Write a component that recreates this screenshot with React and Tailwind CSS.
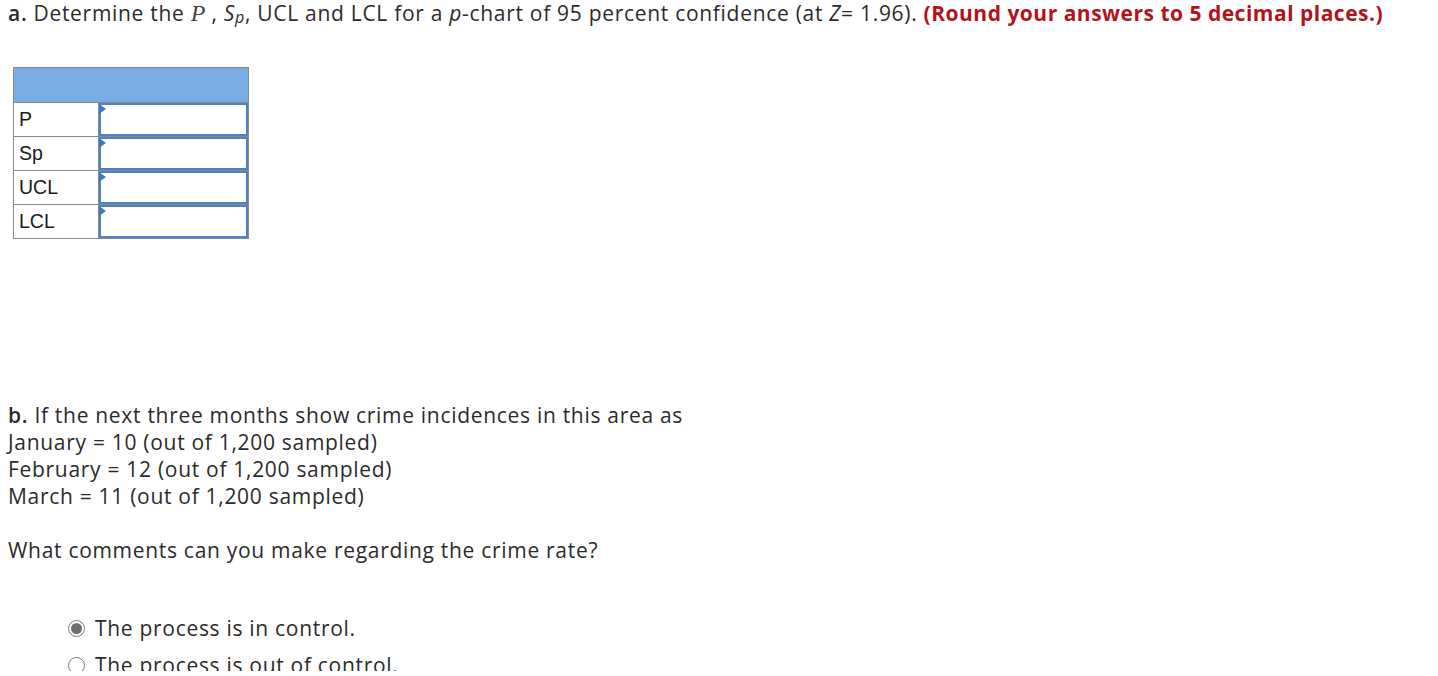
import React from "react";

function InputCell() {
  return (
    <td className="relative p-0 border border-[#8a8a8a] w-[149px]">
      <div className="relative h-[33px] border-2 border-[#4d83c6] bg-white">
        <div className="absolute left-[-2px] top-[-1px] w-0 h-0 border-t-[5px] border-b-[5px] border-l-[7px] border-t-transparent border-b-transparent border-l-[#3c78c2]" />
      </div>
    </td>
  );
}

function Row({ label }) {
  return (
    <tr>
      <td className="border border-[#8a8a8a] w-[85px] h-[34px] pl-[5px] text-[19.5px] text-[#1a1a1a] align-middle tracking-normal" style={{ fontFamily: '"Liberation Sans", Arial, sans-serif' }}>
        {label}
      </td>
      <InputCell />
    </tr>
  );
}

function Radio({ checked, children }) {
  return (
    <div className="flex items-center h-[37px]">
      <span className="w-[17px] h-[17px] rounded-full border border-[#777] bg-white flex items-center justify-center mr-[10px]">
        {checked && <span className="w-[11px] h-[11px] rounded-full bg-[#6f6f6f]" />}
      </span>
      <span>{children}</span>
    </div>
  );
}

export default function App() {
  return (
    <div
      className="w-[1438px] h-[671px] overflow-hidden bg-white text-[#2b2b2b] text-[21px] tracking-[0.7px]"
      style={{ fontFamily: '"Open Sans", "Noto Sans", sans-serif' }}
    >
      <div className="pl-[8px] pt-0 leading-[26px] whitespace-nowrap">
        <b className="font-semibold">a.</b> Determine the{" "}
        <span className="italic text-[24px] leading-[24px] text-[#444] tracking-normal" style={{ fontFamily: '"Liberation Serif", serif' }}>P</span>
        <span> , </span>
        <i>S</i>
        <sub className="italic text-[16px] leading-[16px] relative top-[2px]">p</sub>, UCL and LCL for a <i>p</i>-chart of 95 percent confidence (at{" "}
        <i>Z</i>= 1.96).{" "}
        <b className="font-bold text-[#b4121b] tracking-[0.5px]">(Round your answers to 5 decimal places.)</b>
      </div>

      <div className="ml-[13px] mt-[41px]">
        <table className="border-collapse border border-[#8a8a8a] w-[236px]">
          <tbody>
            <tr>
              <td colSpan={2} className="h-[35px] bg-[#79ace3] border border-[#8a8a8a]" />
            </tr>
            <Row label="P" />
            <Row label="Sp" />
            <Row label="UCL" />
            <Row label="LCL" />
          </tbody>
        </table>
      </div>

      <div className="pl-[8px] mt-[163px] leading-[27px]">
        <div>
          <b className="font-semibold">b.</b> If the next three months show crime incidences in this area as
        </div>
        <div>January = 10 (out of 1,200 sampled)</div>
        <div>February = 12 (out of 1,200 sampled)</div>
        <div>March = 11 (out of 1,200 sampled)</div>
        <div className="h-[27px]" />
        <div>What comments can you make regarding the crime rate?</div>
      </div>

      <div className="pl-[68px] mt-[46px]">
        <Radio checked>The process is in control.</Radio>
        <Radio>The process is out of control.</Radio>
      </div>
    </div>
  );
}
